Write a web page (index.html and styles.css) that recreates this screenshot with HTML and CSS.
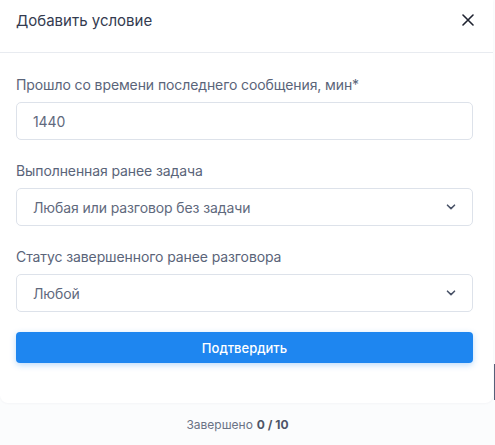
FILE: index.html
```html
<!DOCTYPE html>
<html lang="ru">
<head>
<meta charset="utf-8">
<link rel="stylesheet" href="styles.css">
</head>
<body>
<div class="modal">
  <div class="modal-header">
    <span class="modal-title">Добавить условие</span>
    <button class="close" aria-label="Закрыть">
      <svg width="12" height="12" viewBox="0 0 12 12"><path d="M1 1L11 11M11 1L1 11" stroke="#1f2330" stroke-width="1.6" stroke-linecap="round"/></svg>
    </button>
  </div>
  <div class="modal-body">
    <div class="field">
      <label class="label">Прошло со времени последнего сообщения, мин*</label>
      <div class="control">1440</div>
    </div>
    <div class="field">
      <label class="label">Выполненная ранее задача</label>
      <div class="control select">
        <span>Любая или разговор без задачи</span>
        <svg class="chev" width="10" height="6" viewBox="0 0 10 6"><path d="M1.5 1.2L5 4.6L8.5 1.2" fill="none" stroke="#4a5368" stroke-width="1.6" stroke-linecap="round" stroke-linejoin="round"/></svg>
      </div>
    </div>
    <div class="field">
      <label class="label">Статус завершенного ранее разговора</label>
      <div class="control select">
        <span>Любой</span>
        <svg class="chev" width="10" height="6" viewBox="0 0 10 6"><path d="M1.5 1.2L5 4.6L8.5 1.2" fill="none" stroke="#4a5368" stroke-width="1.6" stroke-linecap="round" stroke-linejoin="round"/></svg>
      </div>
    </div>
    <button class="submit">Подтвердить</button>
  </div>
</div>
<div class="footer">Завершено <b>0 / 10</b></div>
<div class="edge"></div>
</body>
</html>
```
FILE: styles.css
```css
* { box-sizing: border-box; }
html, body { margin: 0; padding: 0; }
body {
  position: relative;
  width: 495px;
  height: 445px;
  overflow: hidden;
  background: #fbfcfd;
  font-family: Inter, "Noto Sans", sans-serif;
}
.modal {
  width: 493px;
  height: 403px;
  background: #fff;
  border-radius: 0 0 8px 8px;
  box-shadow: 0 1px 2px rgba(30, 40, 60, 0.03);
}
.modal-header {
  height: 53px;
  padding: 0 19px 12px 16px;
  display: flex;
  align-items: center;
  justify-content: space-between;
  border-bottom: 1px solid #e8ebf0;
}
.modal-title {
  font-size: 15px;
  color: #343b50;
}
.close {
  border: 0;
  background: none;
  padding: 0;
  width: 12px;
  height: 14px;
  display: flex;
  align-items: center;
  justify-content: center;
  cursor: pointer;
}
.modal-body {
  padding: 23px 20px 0 16px;
  display: flex;
  flex-direction: column;
}
.field {
  display: flex;
  flex-direction: column;
  gap: 8px;
  margin-bottom: 22px;
}
.label {
  font-size: 14px;
  color: #5a6479;
  line-height: 18px;
  letter-spacing: -0.1px;
}
.control {
  height: 38px;
  border: 1px solid #dde2ea;
  border-radius: 5px;
  padding: 0 16px;
  display: flex;
  align-items: center;
  font-size: 14px;
  color: #5f697d;
  letter-spacing: -0.1px;
}
.select {
  justify-content: space-between;
}
.submit {
  margin-top: -2px;
  height: 31px;
  border: 0;
  border-radius: 4px;
  background: #1e86f0;
  color: #fff;
  font-family: Inter, "Noto Sans", sans-serif;
  font-size: 13px;
  font-weight: 500;
  box-shadow: 0 2px 6px rgba(30, 134, 240, 0.3);
  cursor: pointer;
}
.footer {
  height: 42px;
  display: flex;
  align-items: center;
  justify-content: center;
  font-size: 12px;
  color: #6a7385;
  padding-right: 20px;
}
.footer b {
  font-weight: 700;
  color: #4d5568;
  margin-left: 4px;
}
.edge {
  position: absolute;
  right: 0;
  top: 364px;
  width: 1px;
  height: 36px;
  background: #56607a;
}
```
